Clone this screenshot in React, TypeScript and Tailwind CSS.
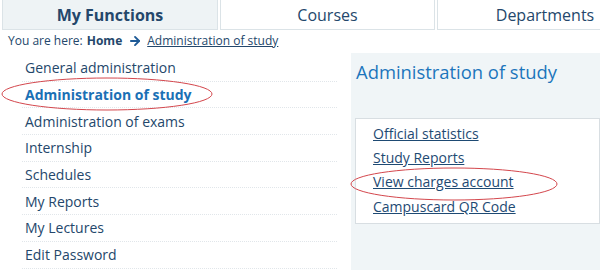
import { ArrowRight } from 'lucide-react';

const menu = [
    'General administration',
    'Administration of study',
    'Administration of exams',
    'Internship',
    'Schedules',
    'My Reports',
    'My Lectures',
    'Edit Password',
];

const links = ['Official statistics', 'Study Reports', 'View charges account', 'Campuscard QR Code'];

export default function App() {
    return (
        <div
            className="relative w-[600px] h-[270px] overflow-hidden bg-white text-[#24476b]"
            style={{ fontFamily: '"Open Sans", "Noto Sans", sans-serif' }}
        >
            {/* Tabs */}
            <div className="flex gap-[2px] pl-[2px] -mt-px">
                <div className="w-[216px] h-[31px] shrink-0 flex items-center justify-center border border-[#dbe3e7] bg-[#eef3f5] text-[16px] font-bold">
                    My Functions
                </div>
                <div className="w-[215px] h-[31px] shrink-0 flex items-center justify-center border border-[#dbe3e7] text-[16px]">
                    Courses
                </div>
                <div className="w-[216px] h-[31px] shrink-0 flex items-center justify-center border border-[#dbe3e7] text-[16px]">
                    Departments
                </div>
            </div>

            {/* Breadcrumb */}
            <div className="flex items-center pl-[8px] mt-[2px] h-[18px] text-[12px]">
                <span>You are here:</span>
                <span className="font-bold ml-[4px]">Home</span>
                <ArrowRight className="ml-[6px] text-[#1e5a96]" size={14} strokeWidth={3.2} />
                <span className="ml-[5px] underline">Administration of study</span>
            </div>

            <div className="flex">
                {/* Left menu */}
                <ul className="w-[315px] ml-[22px] mt-[5px]">
                    {menu.map((m, i) => (
                        <li
                            key={m}
                            className={`h-[26.7px] flex items-center pl-[3px] text-[14px] border-b border-dotted border-[#e1e6ea] ${
                                i === 1 ? 'font-bold text-[#1a70b5]' : ''
                            }`}
                        >
                            {m}
                        </li>
                    ))}
                </ul>

                {/* Right panel */}
                <div className="ml-[14px] mt-[3px] flex-1 h-[220px] bg-[#f0f5f7] pl-[4px]">
                    <h2 className="text-[18.4px] text-[#1c75bc] leading-[24px] mt-[7px] pl-[1px]">Administration of study</h2>
                    <div className="mt-[34px] h-[106px] bg-white border border-[#d8dee2] pl-[17px] pt-[2px]">
                        {links.map((l) => (
                            <div key={l} className="h-[24.4px] flex items-center text-[14px] underline text-[#1e4a73]">
                                {l}
                            </div>
                        ))}
                    </div>
                </div>
            </div>

            {/* Red annotation ellipses */}
            <svg className="absolute inset-0 pointer-events-none" width="600" height="270">
                <ellipse cx="107" cy="94" rx="105" ry="16" fill="none" stroke="#d4474d" strokeWidth="1" />
                <ellipse cx="454" cy="184" rx="103" ry="16" fill="none" stroke="#d4474d" strokeWidth="1" />
            </svg>
        </div>
    );
}
